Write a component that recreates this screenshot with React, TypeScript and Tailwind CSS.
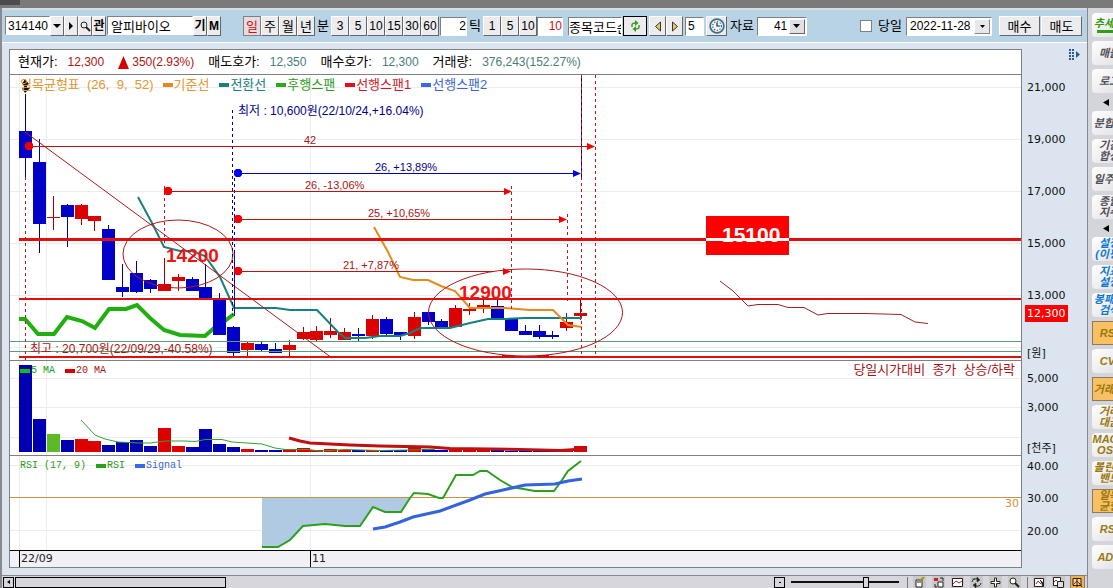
import type { ReactNode } from "react";

const RED = "#dd0000";
const BLUE = "#0000c8";
const DARK_RED = "#a81414";
const NAVY = "#00008b";

// top/bottom of the body, high/low of the wick, r = rising, b = falling
type Candle = [top: number, bottom: number, high: number, low: number, dir: "r" | "b"];

const candles: Candle[] = [
  [131, 158, 94, 177, "b"],
  [162, 224, 139, 253, "b"],
  [217, 218, 196, 230, "r"],
  [205, 217, 204, 247, "b"],
  [205, 219, 204, 225, "r"],
  [216, 221, 216, 231, "r"],
  [229, 280, 225, 280, "b"],
  [287, 292, 264, 297, "b"],
  [273, 292, 261, 293, "b"],
  [280, 289, 279, 293, "b"],
  [284, 291, 258, 291, "r"],
  [277, 281, 274, 291, "r"],
  [279, 291, 277, 291, "b"],
  [287, 298, 264, 298, "b"],
  [300, 335, 293, 335, "b"],
  [327, 353, 326, 356, "b"],
  [343, 350, 341, 356, "r"],
  [344, 350, 341, 352, "b"],
  [349, 353, 343, 353, "b"],
  [345, 350, 340, 356, "r"],
  [332, 339, 327, 340, "r"],
  [331, 340, 326, 342, "r"],
  [331, 335, 318, 338, "r"],
  [332, 340, 328, 340, "r"],
  [334, 336, 328, 342, "b"],
  [319, 336, 315, 339, "r"],
  [319, 334, 317, 336, "b"],
  [332, 335, 332, 340, "b"],
  [317, 336, 312, 339, "r"],
  [312, 322, 312, 325, "b"],
  [321, 329, 319, 329, "b"],
  [308, 327, 305, 327, "r"],
  [309, 311, 303, 315, "r"],
  [305, 309, 300, 313, "r"],
  [306, 319, 300, 319, "b"],
  [319, 331, 319, 331, "b"],
  [331, 335, 325, 335, "b"],
  [331, 337, 325, 339, "b"],
  [335, 337, 331, 339, "b"],
  [322, 328, 313, 331, "r"],
  [313, 316, 299, 320, "r"],
];

const volumeTops = [
  365, 419, 434, 440, 439, 441, 445, 442, 440, 446, 428, 446, 447, 429, 444, 447, 449, 450, 450, 449,
  448, 450, 449, 450, 450, 450, 450, 450, 448, 449, 450, 450, 450, 450, 450, 451, 451, 451, 450, 449, 446,
];

const barX = (i: number) => Math.round(19 + i * 13.88);

type ArrowProps = { x1: number; x2: number; y: number; label: string; lx: number; blue?: boolean; cut?: boolean };

function SpanArrow({ x1, x2, y, label, lx, blue, cut }: ArrowProps) {
  const line = blue ? "#0000b4" : "#c01010";
  const head = blue ? "#0000f0" : "#f00000";
  return (
    <g>
      <path d={cut ? `M${x1} ${y + 0.5}H494` : `M${x1} ${y + 0.5}H${x2 - 6}`} stroke={line} />
      <path d={`M${x1 - 4} ${y - 2}l2-2h4l2 2v4l-2 2h-4l-2-2z`} fill={head} />
      <path d={`M${x2 - 8} ${y - 3}l8 3.5l-8 3.5z`} fill={head} />
      <text x={lx} y={y - 2} fontSize="11" fill={blue ? NAVY : DARK_RED}>{label}</text>
    </g>
  );
}

function Grid({ rows, y1, y2 }: { rows: number[]; y1: number; y2: number }) {
  return (
    <g stroke="#ececec" shapeRendering="crispEdges">
      {rows.map((y) => <path key={y} d={`M10 ${y + 0.5}H4000`} />)}
      {[19, 46, 310].map((x) => <path key={x} d={`M${x + 0.5} ${y1}V${y2}`} />)}
    </g>
  );
}

function LegendItem({ color, text, children }: { color: string; text: string; children: ReactNode }) {
  return (
    <span className={`flex items-center ${text}`}>
      <i className={`mr-px h-1 w-[10px] ${color}`} />
      {children}
    </span>
  );
}

function PricePanel() {
  return (
    <div className="relative overflow-hidden border-b border-[#808080]">
      <svg viewBox="10 75 1011 285" preserveAspectRatio="xMinYMin meet" className="block h-[285px] w-full overflow-visible" fill="none">
        <Grid rows={[87, 139, 191, 243, 295, 347]} y1={75} y2={360} />
        <path d="M19 319H25L38 334H54L67 317L82 321L95 328L109 309H126L137 305L150 318L164 330L180 335L205 336L214 328L226 320L234 314" stroke="#1fb010" strokeWidth="4" />
        <g shapeRendering="crispEdges">
          {candles.map(([top, bottom, high, low, dir], i) => {
            const x = barX(i);
            const color = dir === "r" ? RED : BLUE;
            return (
              <g key={i} fill={color}>
                <rect x={x + 6} y={high} width="1" height={low - high} fill={dir === "r" ? "#a80000" : "#000090"} />
                <rect x={x} y={top} width="13" height={bottom - top} />
              </g>
            );
          })}
        </g>
        <path d="M138 197L152 223L164 247L180 251H192L205 256L220 277L234 308H276L290 310H317L338 332L345 338H365L380 336H400L410 333L420 328H450L470 323L488 319H505L525 318H582" stroke="#148080" strokeWidth="2" />
        <path d="M374 227L388 252L400 277L413 280H428L441 286L455 291L470 308H505L530 310H553L568 325L582 327" stroke="#e68a1e" strokeWidth="2" />
        <g shapeRendering="crispEdges">
          <path d="M10 341.5H4000M10 351.5H4000" stroke="#5a9c78" />
          <path d="M19 239.5H4000" stroke="#e01010" strokeWidth="3" />
          <path d="M19 299H4000M19 357H4000" stroke="#e01010" strokeWidth="2" />
        </g>
        <path d="M25 132L332 358" stroke="#b01818" />
        <ellipse cx="178" cy="254" rx="55" ry="34" stroke="#b01818" />
        <ellipse cx="525.5" cy="312.5" rx="97" ry="43.5" stroke="#b01818" />
        <path d="M502 356H514M537 356H549" stroke="#c01010" strokeWidth="2" />
        <path d="M581.5 75V180" stroke="#100080" />
        <path d="M234.5 250V316" stroke="#4a1080" />
        <g stroke="#c01818" strokeDasharray="3 3">
          <path d="M25.5 177V360M164.5 186V247M511.5 186V310M567.5 214V302M581.5 75V356M595.5 75V356" />
          <path d="M232.5 110V315M234.5 172V316" stroke="#0000a0" />
        </g>
        <path d="M25.5 94V131" stroke="#000090" />
        <path d="M22 84l3-5l4 5l-2 1v3h3l-5 5l-3-5h2v-3z" fill="#111" />
        <g fontFamily="'Liberation Sans','Noto Sans CJK KR',sans-serif">
          <SpanArrow x1={29} x2={595} y={146} label="42" lx={304} />
          <SpanArrow x1={238} x2={581} y={173} label="26, +13,89%" lx={375} blue />
          <SpanArrow x1={168} x2={512} y={191} label="26, -13,06%" lx={305} />
          <SpanArrow x1={238} x2={567} y={219} label="25, +10,65%" lx={368} />
          <SpanArrow x1={238} x2={511} y={271} label="21, +7,87%" lx={343} cut />
        </g>
        <g fontFamily="'Liberation Sans','Noto Sans CJK KR',sans-serif" fontSize="12">
          <text x="238" y="115" fill={NAVY}>최저 : 10,600원(22/10/24,+16.04%)</text>
          <text x="30" y="353" fill={DARK_RED}>최고 : 20,700원(22/09/29,-40.58%)</text>
        </g>
        <rect x="706" y="216" width="83" height="39" fill="#ff0000" />
        <g fontFamily="'Liberation Sans',sans-serif" fontWeight="bold" fontSize="19" fill="#ee1414">
          <text x="166" y="262">14200</text>
          <text x="459" y="299">12900</text>
          <text x="722" y="242" fontSize="21" fill="#fff">15100</text>
        </g>
        <rect x="706" y="238" width="83" height="3" fill="#fff" />
        <path d="M720 281L733 291L748 306L758 304.5H778L788 307.5H804L818 315L828 313.5H866L901 314.5L915 322L928 323.5" stroke="#a02020" />
      </svg>
      <div className="absolute left-[10px] top-1 flex whitespace-nowrap text-[13px] leading-3 text-[#e6962e]">
        <span className="mr-[9px]">일목균형표&nbsp; (26,&nbsp; 9,&nbsp; 52)</span>
        <div className="flex gap-[10px]">
          <LegendItem color="bg-[#e8881c]" text="text-[#e6962e]">기준선</LegendItem>
          <LegendItem color="bg-[#188080]" text="text-[#188080]">전환선</LegendItem>
          <LegendItem color="bg-[#2aaa1a]" text="text-[#2a9a1a]">후행스팬</LegendItem>
          <LegendItem color="bg-[#e01020]" text="text-[#d01828]">선행스팬1</LegendItem>
          <LegendItem color="bg-[#3a6ae0]" text="text-[#3a68c8]">선행스팬2</LegendItem>
        </div>
      </div>
    </div>
  );
}

function VolumePanel() {
  return (
    <div className="relative overflow-hidden border-b border-[#808080]">
      <svg viewBox="10 361 1011 94" preserveAspectRatio="xMinYMin meet" className="block h-[94px] w-full overflow-visible" fill="none">
        <Grid rows={[378, 407, 437]} y1={361} y2={455} />
        {volumeTops.map((y, i) => (
          <rect key={i} x={barX(i)} y={y} width="13" height={452 - y} fill={i === 2 ? "#5cba24" : candles[i][4] === "r" ? RED : "#0000b0"} />
        ))}
        <path d="M81 420L95 435L105 439L118 442L138 443H150L165 441H185L195 441.5L205 439.5H222L232 442L262 444L275 448L285 449.5H308L320 451L345 449.5L380 450.5L435 449.5" stroke="#32a032" />
        <path d="M289 438L300 441L310 443L350 445L380 446L430 447L450 448.5L520 449.5L560 450.5L575 449.5L587 449" stroke="#c01010" strokeWidth="3" />
      </svg>
      <div className="absolute left-[10px] top-1 flex gap-[10px] font-['Liberation_Mono',monospace] text-[10px] leading-3">
        <LegendItem color="bg-[#10c010]" text="text-[#20a020]">5 MA</LegendItem>
        <LegendItem color="bg-[#d80000]" text="text-[#a81414]">20 MA</LegendItem>
      </div>
      <p className="absolute right-[6px] top-[3px] text-[13px] leading-3 text-[#a81414]">당일시가대비&nbsp; 종가&nbsp; 상승/하락</p>
    </div>
  );
}

function RsiPanel() {
  const line = "M262 547H278L290 540L303 526L325 524L345 526H360L373 507L385 512H401L410 498";
  return (
    <div className="relative overflow-hidden border-b border-black">
      <svg viewBox="10 456 1011 94" preserveAspectRatio="xMinYMin meet" className="block h-[94px] w-full overflow-visible" fill="none">
        <Grid rows={[465, 530]} y1={456} y2={550} />
        <path d={`${line}H262Z`} fill="#b0cae4" />
        <path d="M10 497.5H4000" stroke="#c8963c" />
        <path d={`${line}L414 493L428 494L439 498H443L456 475H473L480 471H487L500 480L512 487L535 491H554L562 480L568 471L581 461`} stroke="#2ca01e" strokeWidth="2" />
        <path d="M373 529L385 527L400 522L413 517L440 511L470 500L485 494L503 490L525 485L555 484L568 481L582 479" stroke="#3464dc" strokeWidth="3" />
      </svg>
      <div className="absolute left-[10px] top-1 flex gap-[10px] font-['Liberation_Mono',monospace] text-[10px] leading-3 text-[#2a9a1a]">
        <span>RSI (17, 9)</span>
        <LegendItem color="bg-[#2aa01a]" text="text-[#2a9a1a]">RSI</LegendItem>
        <LegendItem color="bg-[#3a6ae0]" text="text-[#3a68c8]">Signal</LegendItem>
      </div>
      <span className="absolute right-[2px] top-[42px] font-['DejaVu_Sans'] text-[11px] leading-3 text-[#c8963c]">30</span>
    </div>
  );
}

function PriceAxis() {
  return (
    <div className="relative h-[286px] pl-[5px]">
      {["21,000", "19,000", "17,000", "15,000", "13,000"].map((v) => (
        <p key={v} className="h-[52px] pt-[7px] leading-3">{v}</p>
      ))}
      <p className="pt-[13px] leading-3">[원]</p>
      <span className="absolute left-[3px] top-[230px] h-[17px] bg-[#ff0000] px-[2px] leading-[17px] text-white">12,300</span>
    </div>
  );
}

function Quote({ label, value, color }: { label: string; value: string; color: string }) {
  return (
    <span className="flex items-center gap-[10px]">
      <span className="text-[13px] text-black">{label}:</span>
      <span className={`text-xs ${color}`}>{value}</span>
    </span>
  );
}

function Chart() {
  return (
    <section className="flex pb-[6px] pl-[7px] pt-[6px]">
      <div className="min-w-0 flex-1 border border-[#808080] bg-white">
        <div className="flex h-[25px] items-center gap-[14px] whitespace-nowrap border-b border-[#808080] pl-2">
          <Quote label="현재가" value="12,300" color="text-[#b01414]" />
          <span className="flex items-center gap-[3px] text-xs text-[#b01414]">
            <svg width="11" height="13" viewBox="0 0 11 13"><path d="M5.500 0L11 13H0z" fill="#d80000" /></svg>
            350(2.93%)
          </span>
          <Quote label="매도호가" value="12,350" color="text-[#4a7c78]" />
          <Quote label="매수호가" value="12,300" color="text-[#4a7c78]" />
          <Quote label="거래량" value="376,243(152.27%)" color="text-[#4a7c78]" />
        </div>
        <PricePanel />
        <VolumePanel />
        <RsiPanel />
        <div className="flex h-4 bg-[#f0f0f5] pl-[9px] font-['DejaVu_Sans'] text-[11px] leading-4 text-[#222]">
          <span className="w-[291px] border-l border-black pl-px">22/09</span>
          <span className="border-l border-black pl-px">11</span>
        </div>
      </div>
      <div className="w-[65px] font-['DejaVu_Sans','Noto_Sans_CJK_KR',sans-serif] text-[11px] text-[#111]">
        <div className="flex h-[26px] justify-end pr-[6px]">
          <svg width="12" height="12" viewBox="0 0 12 12" fill="#2a5a94">
            {[0, 3, 6, 9].map((y) => <path key={y} d={`M0 ${y}h2v2h-2zM3 ${y}h2v2h-2z`} />)}
            <path d="M7 2l4 3.500l-4 3.500z" />
          </svg>
        </div>
        <PriceAxis />
        <div className="h-[95px] pl-[5px] leading-3">
          <p className="h-[29px] pt-3">5,000</p>
          <p className="h-[40px] pt-3">3,000</p>
          <p className="pt-[13px]">[천주]</p>
        </div>
        <div className="pl-[5px] leading-3">
          <p className="h-8 pt-[5px]">40.00</p>
          <p className="h-[33px] pt-[5px]">30.00</p>
          <p className="pt-[5px]">20.00</p>
        </div>
      </div>
    </section>
  );
}

function Key({ children, on, className = "w-[18px] text-xs", label }: { children: ReactNode; on?: boolean; className?: string; label?: string }) {
  return (
    <button
      type="button"
      aria-label={label}
      className={`flex h-5 shrink-0 items-center justify-center border leading-none ${className} ${
        on ? "border-[#808080] bg-[#e4dce0] text-[#d01010]" : "border-b-[#666] border-l-white border-r-[#666] border-t-white bg-[#ececee] text-black"
      }`}
    >
      {children}
    </button>
  );
}

const field = "h-[19px] min-w-0 shrink-0 border border-b-white border-l-[#808080] border-r-white border-t-[#808080] bg-white leading-none";

function Toolbar() {
  return (
    <header className="flex h-[33px] items-center overflow-hidden whitespace-nowrap border-b border-white bg-[#b9d3e6] pl-[3px] pr-[5px] text-[13px]">
      <div className="flex shrink-0">
        <input aria-label="종목코드" defaultValue="314140" className={`${field} w-[45px] pl-[2px] text-xs`} />
        <Key label="종목 목록" className="w-[14px]"><svg width="8" height="4"><path d="M0 0h8l-4 4z" /></svg></Key>
        <Key label="다음 종목" className="w-[14px]"><svg width="4" height="8"><path d="M0 0v8l4-4z" /></svg></Key>
        <Key label="검색" className="w-[14px]">
          <svg width="11" height="11" viewBox="0 0 11 11" fill="none" stroke="#222"><circle cx="4" cy="4" r="3" /><path d="M6 6l4 4" strokeWidth="2" /></svg>
        </Key>
        <Key className="w-[14px] text-xs font-bold">관</Key>
        <input aria-label="종목명" defaultValue="알피바이오" className={`${field} ml-px w-[86px] pl-[3px] text-[13px]`} />
        <Key className="w-[14px] text-xs font-bold">기</Key>
        <Key className="w-[14px] text-xs font-bold">M</Key>
      </div>
      <div className="ml-[22px] flex shrink-0 items-center">
        <Key on className="w-[18px] text-[13px]">일</Key>
        <Key className="w-[18px] text-[13px]">주</Key>
        <Key className="w-[18px] text-[13px]">월</Key>
        <Key className="w-[18px] text-[13px]">년</Key>
        <span className="w-4 text-center">분</span>
        {["3", "5", "10", "15", "30", "60"].map((n) => <Key key={n}>{n}</Key>)}
        <input aria-label="분" defaultValue="2" className={`${field} ml-px w-[27px] text-right text-xs`} />
        <span className="w-4 text-center">틱</span>
        {["1", "5", "10"].map((n) => <Key key={n}>{n}</Key>)}
        <input aria-label="틱" defaultValue="10" className={`${field} w-[26px] text-right text-xs text-[#d01010]`} />
      </div>
      <div className="ml-[5px] flex shrink-0 items-center">
        <input aria-label="종목코드 순환" defaultValue="종목코드순" className={`${field} w-[54px] text-[13px]`} />
        <Key label="새로고침" className="ml-px w-[24px] outline outline-1 -outline-offset-1 outline-black">
          <svg width="11" height="12" viewBox="0 0 11 12" fill="none" stroke="#3a9a20" strokeWidth="1.500">
            <path d="M2 7V5Q2 3 6 3M9 5v2Q9 9 5 9" /><path d="M5 0l3.500 3L5 6zM6 6L2.500 9L6 12z" fill="#3a9a20" stroke="none" />
          </svg>
        </Key>
        <Key label="이전" className="ml-[2px] w-[17px]"><svg width="8" height="11" viewBox="0 0 8 11"><path d="M6.500 1v9l-5-4.500z" fill="#e8c860" stroke="#333" /></svg></Key>
        <Key label="다음" className="w-[17px]"><svg width="8" height="11" viewBox="0 0 8 11"><path d="M1.500 1v9l5-4.500z" fill="#e8c860" stroke="#333" /></svg></Key>
        <input aria-label="간격" defaultValue="5" className={`${field} ml-[2px] w-[19px] pl-[2px] text-xs`} />
        <Key label="시간" className="ml-[2px] w-[21px]">
          <svg width="16" height="16" viewBox="0 0 14 14" fill="#eef6fa" stroke="#3c7090"><circle cx="7" cy="7" r="6" strokeWidth="1.500" /><circle cx="7" cy="7" r="3.800" stroke="#445" strokeDasharray="1 1.500" /><path d="M7 4v3h2.500" fill="none" stroke="#222" /></svg>
        </Key>
        <label htmlFor="count" className="mx-[3px]">자료</label>
        <span className="relative">
          <select id="count" className={`${field} block w-[50px] appearance-none pl-4 text-xs`}><option>41</option></select>
          <span className="pointer-events-none absolute right-[2px] top-[2px] flex h-[15px] w-4 items-center justify-center border border-b-[#666] border-l-white border-r-[#666] border-t-white bg-[#e0e0e4]">
            <svg width="7" height="4"><path d="M0 0h7l-3.500 4z" /></svg>
          </span>
        </span>
      </div>
      <div className="ml-auto flex shrink-0 items-center">
        <label className="flex items-center gap-[6px]">
          <input type="checkbox" className="h-3 w-3 appearance-none border border-[#808080] bg-white" />
          당일
        </label>
        <span className="relative ml-1">
          <select aria-label="날짜" className={`${field} block w-[86px] appearance-none pl-[3px] text-xs`}><option>2022-11-28</option></select>
          <span className="pointer-events-none absolute right-[2px] top-[2px] flex h-[15px] w-4 items-center justify-center border border-b-[#888] border-l-white border-r-[#888] border-t-white bg-[#e8e8ec]">
            <svg width="5" height="3"><path d="M0 0h5l-2.500 3z" /></svg>
          </span>
        </span>
        <Key className="ml-[7px] w-[41px] text-[13px]">매수</Key>
        <Key className="ml-px w-[41px] text-[13px]">매도</Key>
      </div>
    </header>
  );
}

function BottomIcon({ label, on, children }: { label: string; on?: boolean; children: ReactNode }) {
  return (
    <button type="button" aria-label={label} className={`flex h-3 w-[13px] items-center justify-center ${on ? "bg-[#f0b050] outline outline-1 outline-[#808080]" : "bg-[#c8c8c8]"}`}>
      <svg width="11" height="11" viewBox="0 0 11 11" fill="none" stroke="#222">{children}</svg>
    </button>
  );
}

function BottomBar() {
  return (
    <footer className="flex h-[13px] items-center border-t border-[#888] bg-[#d6d6dc] pl-px pr-[3px]">
      <button type="button" aria-label="왼쪽" className="flex h-[11px] w-[11px] items-center justify-center border border-black">
        <svg width="3" height="4"><path d="M3 0v4L0 2z" /></svg>
      </button>
      <div className="ml-px h-[11px] w-[211px] border border-black" />
      <div className="ml-auto flex items-center">
        <button type="button" aria-label="축소" className="flex h-[11px] w-[11px] items-center justify-center border border-black"><i className="h-px w-[2px] bg-black" /></button>
        <input
          type="range"
          aria-label="확대"
          defaultValue={71}
          className="ml-[6px] h-[11px] w-[108px] appearance-none bg-[linear-gradient(#111,#111)] bg-[length:100%_2px] bg-center bg-no-repeat [&::-webkit-slider-thumb]:h-[11px] [&::-webkit-slider-thumb]:w-[6px] [&::-webkit-slider-thumb]:appearance-none [&::-webkit-slider-thumb]:border [&::-webkit-slider-thumb]:border-black [&::-webkit-slider-thumb]:bg-[#d6d6dc]"
        />
        <i className="ml-2 h-[11px] w-px bg-[#777]" />
        <div className="ml-[5px] flex gap-[6px]">
          <BottomIcon label="편집"><path d="M2 3h6v7H2zM3 5h4" fill="#fff" /><path d="M6 4l4-4" stroke="#b09000" strokeWidth="2" /></BottomIcon>
          <BottomIcon label="이동"><path d="M5 5h5v5H5z" fill="#fff" /><path d="M7 1h3v3M2 7v3h2" /><path d="M1 1h4v3H1z" fill="#d02020" stroke="none" /></BottomIcon>
          <BottomIcon label="차트"><path d="M0.500 1.500h10v8H.5z" fill="#fff" /><path d="M1 7l3-3 3 2 3-2" stroke="#c02020" /></BottomIcon>
          <BottomIcon label="갱신"><path d="M1 5q1-4 5-3l2 1M10 6q-1 4-5 3L3 8" /><path d="M6 0v5l3-2zM5 11V6L2 8zM1 2h3" fill="#222" strokeWidth=".5" /></BottomIcon>
          <BottomIcon label="십자선"><path d="M4.500 1h2v3.500H10v2H6.500V10h-2V6.500H1v-2h3.500z" fill="#fff" /></BottomIcon>
          <BottomIcon label="돋보기"><circle cx="4" cy="4" r="3" fill="#fff" /><path d="M6 6l4 4" strokeWidth="2" /></BottomIcon>
        </div>
        <i className="ml-[6px] h-[11px] w-px bg-[#777]" />
        <div className="ml-[5px] flex gap-[6px]">
          <BottomIcon label="차트 선택"><path d="M.5 1.500h9v8h-9z" fill="#fff" /><path d="M2 7l2-3 3 3" stroke="#c02020" /><path d="M6 3l4 4H8l1 3" fill="#222" /></BottomIcon>
          <BottomIcon label="차트 복사"><path d="M.5.5h7v8h-7z" fill="#fff" /><path d="M1 5l2-2 2 2" stroke="#c02020" /><path d="M4.500 4.500h6v6h-6z" fill="#ddd" /></BottomIcon>
          <BottomIcon label="차트 표시" on><path d="M1 1.500h8v7H1z" fill="#f8d080" /><path d="M1 8l4-4 3 3" stroke="#c02020" /><path d="M5 2v8M7 6l3 4" /></BottomIcon>
        </div>
      </div>
    </footer>
  );
}

type Tool = { lines: string[]; tone: string; on?: boolean; fold?: boolean; bar?: boolean };

const GRAY = "text-[#505058]";
const SKY = "text-[#0a78d0]";
const GOLD = "text-[#9a7810]";

const tools: Tool[] = [
  { lines: ["추세선"], tone: "text-[#2f9a10]", bar: true },
  { lines: ["매물"], tone: GRAY },
  { lines: ["로그"], tone: GRAY },
  { lines: [], tone: GRAY, fold: true },
  { lines: ["분합선"], tone: GRAY },
  { lines: ["기간", "합성"], tone: GRAY },
  { lines: ["일주선"], tone: GRAY },
  { lines: ["종합", "지수"], tone: GRAY },
  { lines: [], tone: GRAY, fold: true },
  { lines: ["설정", "(이평)"], tone: SKY },
  { lines: ["지표", "설정"], tone: SKY },
  { lines: ["봉패턴", "검색"], tone: SKY },
  { lines: ["RSI"], tone: GOLD, on: true },
  { lines: ["CVI"], tone: GOLD },
  { lines: ["거래량"], tone: GOLD, on: true },
  { lines: ["거래", "대금"], tone: GOLD },
  { lines: ["MACD", "OSC"], tone: GOLD },
  { lines: ["볼린저", "밴드"], tone: GOLD },
  { lines: ["일목", "균형"], tone: GOLD, on: true },
  { lines: ["RSI"], tone: GOLD },
  { lines: ["ADX"], tone: GOLD },
];

function Sidebar() {
  return (
    <aside className="flex w-[26px] shrink-0 flex-col gap-1 overflow-hidden border-l border-[#888] bg-[#d4d5da] pl-1 pt-[5px]">
      {tools.map((tool, i) =>
        tool.fold ? (
          <button key={i} type="button" aria-label="접기" className="flex h-[10px] w-7 shrink-0 items-center justify-center">
            <svg width="6" height="7"><path d="M6 0v7L0 3.500z" /></svg>
          </button>
        ) : (
          <button
            key={i}
            type="button"
            className={`flex h-6 w-[34px] shrink-0 flex-col items-center justify-center whitespace-nowrap text-[11px] font-bold italic leading-[11px] ${tool.tone} ${
              tool.on ? "border border-[#8a7a60] bg-[#f8c062]" : "rounded-sm bg-linear-to-br from-white to-[#dedee2]"
            }`}
          >
            {tool.lines.map((l) => <span key={l}>{l}</span>)}
            {tool.bar && <i className="mt-px h-[3px] w-6 bg-[#30a010]" />}
          </button>
        )
      )}
    </aside>
  );
}

export default function App() {
  return (
    <div className="flex min-h-screen flex-col bg-[#dce5ef] font-['Liberation_Sans','Noto_Sans_CJK_KR',sans-serif] text-black">
      <div className="h-2 bg-[#7a7a7a]"><div className="h-[5px] w-5 bg-[#4c4c4c]" /></div>
      <div className="flex flex-1 border-l-2 border-[#8a8a90]">
        <main className="flex min-w-0 flex-1 flex-col border-t-2 border-[#d4dce4]">
          <Toolbar />
          <div className="flex-1"><Chart /></div>
          <BottomBar />
        </main>
        <Sidebar />
      </div>
    </div>
  );
}
